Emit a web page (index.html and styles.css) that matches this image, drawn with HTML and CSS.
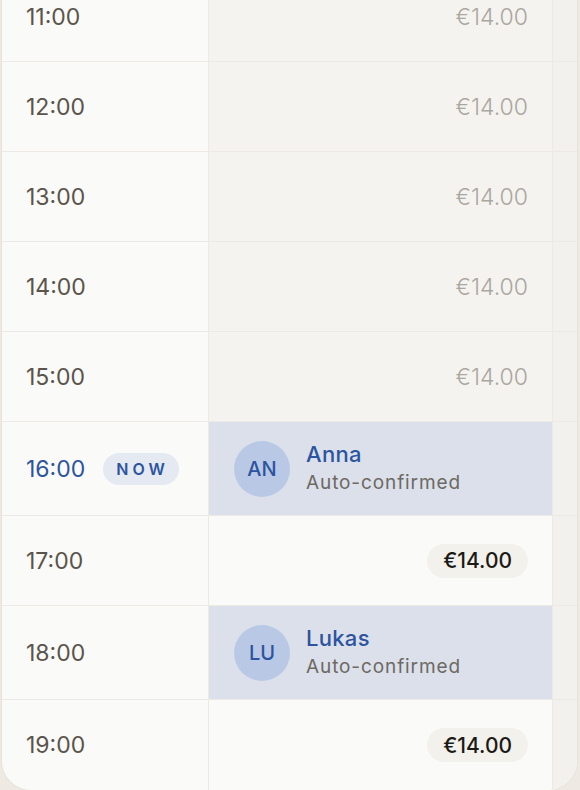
FILE: index.html
```html
<html>

<head>
<link rel="stylesheet" href="styles.css">
</head>

<body>
<div class="card">

    <div class="row">
        <div class="time">11:00</div>
        <div class="slot past"><span class="price">€14.00</span></div>
        <div class="next"></div>
    </div>
    <div class="row">
        <div class="time">12:00</div>
        <div class="slot past"><span class="price">€14.00</span></div>
        <div class="next"></div>
    </div>
    <div class="row">
        <div class="time">13:00</div>
        <div class="slot past"><span class="price">€14.00</span></div>
        <div class="next"></div>
    </div>
    <div class="row">
        <div class="time">14:00</div>
        <div class="slot past"><span class="price">€14.00</span></div>
        <div class="next"></div>
    </div>
    <div class="row">
        <div class="time">15:00</div>
        <div class="slot past"><span class="price">€14.00</span></div>
        <div class="next"></div>
    </div>

    <div class="row row-booked">
        <div class="time current">16:00 <span class="now">NOW</span></div>
        <div class="slot booked">
            <div class="avatar">AN</div>
            <div class="who">
                <div class="name">Anna</div>
                <div class="status">Auto-confirmed</div>
            </div>
        </div>
        <div class="next"></div>
    </div>
    <div class="row">
        <div class="time">17:00</div>
        <div class="slot open"><span class="pill">€14.00</span></div>
        <div class="next"></div>
    </div>
    <div class="row row-booked">
        <div class="time">18:00</div>
        <div class="slot booked">
            <div class="avatar">LU</div>
            <div class="who">
                <div class="name">Lukas</div>
                <div class="status">Auto-confirmed</div>
            </div>
        </div>
        <div class="next"></div>
    </div>
    <div class="row row-last">
        <div class="time">19:00</div>
        <div class="slot open"><span class="pill">€14.00</span></div>
        <div class="next"></div>
    </div>

</div>
</body>

</html>
```

FILE: styles.css
```css
html {
    background: #eeeae3;
}

body {
    margin: 0;
    font-family: Inter, "Noto Sans", sans-serif;
    overflow: hidden;
}

.card {
    margin: -28px 2px 0 1px;
    background: #fafaf8;
    border: 1px solid #e7e3da;
    border-top: none;
    border-radius: 0 0 30px 30px;
    overflow: hidden;
}

.row {
    display: grid;
    grid-template-columns: 207px 344px 1fr;
    height: 90px;
    border-bottom: 1px solid #edeae5;
    box-sizing: border-box;
}
.row-booked {
    height: 94px;
}
.row-last {
    border-bottom: none;
}

.time {
    display: flex;
    align-items: center;
    gap: 18px;
    padding-left: 24px;
    font-size: 23px;
    color: #5a544c;
    border-right: 1px solid #edeae5;
}
.time.current {
    color: #2c54a0;
}

.now {
    display: inline-flex;
    align-items: center;
    height: 32px;
    padding: 0 10px 0 13px;
    border-radius: 16px;
    background: #e4e9f2;
    font-size: 16px;
    font-weight: 600;
    letter-spacing: 4px;
}

.slot {
    display: flex;
    align-items: center;
    border-right: 1px solid #edeae5;
}
.slot.past {
    justify-content: flex-end;
    padding-right: 24px;
    background: #f4f3f0;
}
.slot.open {
    justify-content: flex-end;
    padding-right: 24px;
}
.slot.booked {
    gap: 16px;
    padding-left: 25px;
    background: #dbe0ea;
}

.price {
    font-size: 23px;
    font-weight: 300;
    color: #aba79f;
}

.pill {
    display: inline-flex;
    align-items: center;
    height: 34px;
    padding: 0 16px;
    border-radius: 17px;
    background: #f3f1ec;
    font-size: 21px;
    font-weight: 500;
    color: #1c1a17;
}

.avatar {
    display: flex;
    align-items: center;
    justify-content: center;
    width: 56px;
    height: 56px;
    border-radius: 50%;
    background: #b9c9e5;
    font-size: 20px;
    font-weight: 500;
    color: #2c54a0;
}

.name {
    font-size: 22px;
    font-weight: 500;
    letter-spacing: 0.3px;
    color: #2c54a0;
    line-height: 29px;
}
.status {
    font-size: 19px;
    letter-spacing: 0.9px;
    color: #6d6963;
    line-height: 28px;
}

.next {
    background: #f3f1ed;
}
```
